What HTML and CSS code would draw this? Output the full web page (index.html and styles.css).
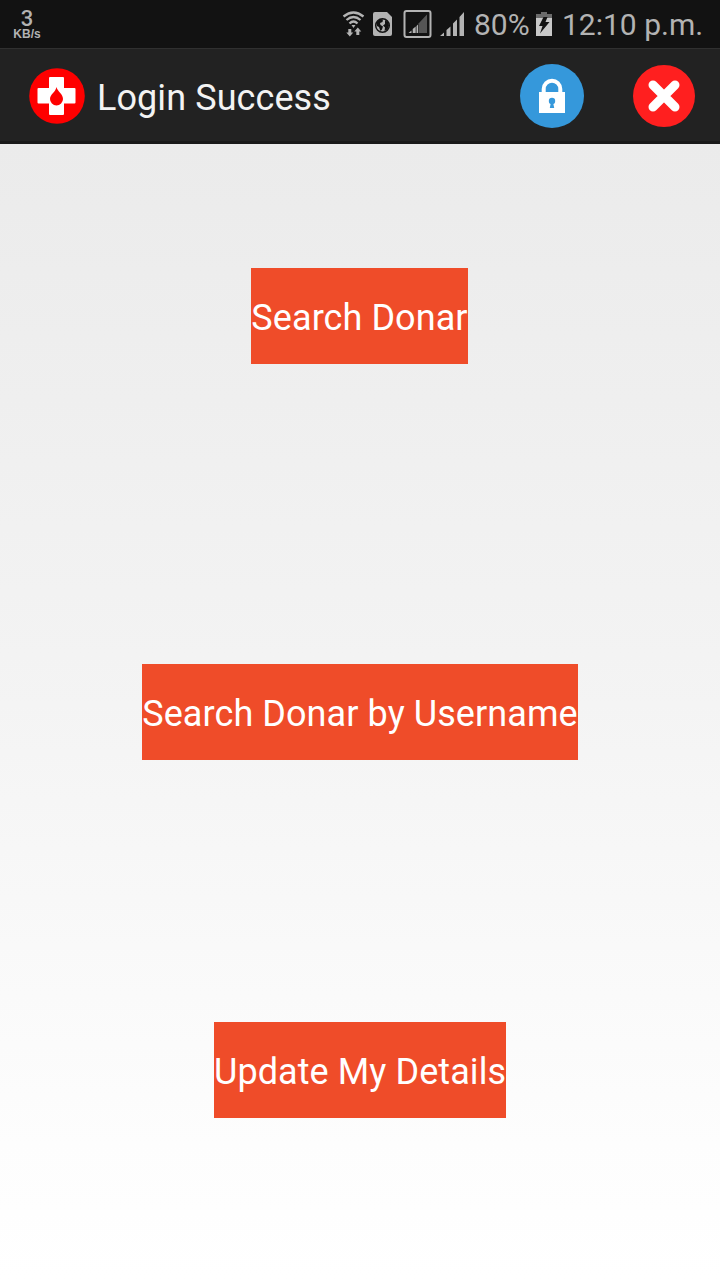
FILE: index.html
```html
<!DOCTYPE html>
<html lang="en">

<head>
  <meta charset="utf-8" />
  <title>Login Success</title>
  <link rel="stylesheet" href="styles.css">
</head>

<body>
  <div class="status-bar">
    <div class="net-speed">
      <span class="speed">3</span>
      <span class="unit">KB/s</span>
    </div>
    <div class="status-right">
      <!-- wifi, sim, signal -->
      <svg class="status-icons" width="126" height="48" viewBox="342 0 126 48">
        <g fill="none" stroke="#b3b3b3" stroke-width="2.3">
          <path d="M343.500 16.500Q353.500 8.500 363.500 16.500" />
          <path d="M346.500 20Q353.500 14 360.500 20" />
          <path d="M349.500 23.500Q353.500 19.500 357.500 23.500" />
        </g>
        <path fill="#b3b3b3" d="M351.500 25h4l-2 3z" />
        <path fill="#b3b3b3" d="M348.300 29h3v3.500h2l-3.500 4-3.500-4h2zM356.300 35h3v-3.500h2l-3.500-4-3.500 4h2z" />
        <path fill="#b3b3b3" d="M375 12h12l5 5v17q0 2-2 2h-15q-2 0-2-2v-20q0-2 2-2z" />
        <circle cx="382.500" cy="25.500" r="6.800" fill="#b3b3b3" stroke="#121212" stroke-width="1.500" />
        <path fill="#121212" d="M376.500 22.500l3.500-3.500 3 .5-.5 2.500-2.500 1 .5 2 2.500 1.500-1 3-1.500 1.500-1.500-4-2-1zM385 20l3 2 1 3.500-1.500 4-3 1.500.5-3.500-2-2 2-1.500z" />
        <rect x="404.500" y="11" width="26" height="26" rx="2" fill="none" stroke="#b3b3b3" stroke-width="2" />
        <path fill="#555" d="M418.500 23.500l8.500-9v18.500h-8.500z" />
        <path fill="#b3b3b3" d="M408.500 33l3-2.500v2.500zM412.700 33v-4l3-2.500v6.500zM416.500 33v-7l1.500-1.500v8.500z" />
        <path fill="#b3b3b3" d="M440 36l4-3.500v3.500zM446.500 36v-6l4-3.500v9.500zM453 36v-12.500l4-4v16.500zM459.500 36v-19l4.500-5v24z" />
      </svg>
      <span class="battery-level">80%</span>
      <svg class="battery" width="16" height="24" viewBox="0 0 16 24">
        <path fill="#6b6b6b" d="M5 0h6v2h5v4h-16v-4h5z" />
        <path fill="#c8c8c8" d="M0 6h16v18h-16z" />
        <path fill="#121212" d="M7.500 5h4l-2 5h4l-9.500 11.500 2.500-7.500h-3.500z" />
      </svg>
      <span class="clock">12:10 p.m.</span>
    </div>
  </div>

  <div class="action-bar">
    <svg class="logo" width="56" height="56" viewBox="0 0 56 56">
      <circle cx="28" cy="28" r="27.800" fill="#f00" />
      <path fill="#fff" d="M21 9h13q1 0 1 1v10h10.500q1 0 1 1v13.500q0 1-1 1h-10.500v10.500q0 1-1 1h-13q-1 0-1-1v-10.500h-10.500q-1 0-1-1v-13.500q0-1 1-1h10.500v-10q0-1 1-1z" />
      <path fill="#f00" d="M27.300 19C29 24 34 26 34 31a6.500 6.500 0 0 1-13 0C21 26 27 24 27.300 19z" />
    </svg>
    <h1 class="title">Login Success</h1>
    <svg class="lock" width="64" height="64" viewBox="0 0 64 64">
      <circle cx="32" cy="32" r="32" fill="#3598db" />
      <path fill="none" stroke="#fff" stroke-width="4" d="M23.700 30v-5a8.300 8.300 0 0 1 16.600 0v5" />
      <path fill="#fff" d="M19 28h26v21h-26z" />
      <circle cx="32" cy="37" r="3.200" fill="#3598db" />
      <path fill="#3598db" d="M31 38h2l1.200 6h-4.400z" />
    </svg>
    <svg class="close" width="62" height="62" viewBox="0 0 62 62">
      <circle cx="31" cy="31" r="31" fill="#ff1f1f" />
      <path stroke="#fff" stroke-width="9" stroke-linecap="round" d="M20 20l22 22M42 20l-22 22" />
    </svg>
  </div>

  <div class="content">
    <button class="btn btn-search">Search Donar</button>
    <button class="btn btn-username">Search Donar by Username</button>
    <button class="btn btn-update">Update My Details</button>
  </div>
</body>

</html>
```
FILE: styles.css
```css
* {
  box-sizing: border-box;
}

body {
  margin: 0;
  width: 720px;
  height: 1280px;
  display: flex;
  flex-direction: column;
  overflow: hidden;
  font-family: Roboto, "Noto Sans", sans-serif;
}

.status-bar {
  height: 48px;
  display: flex;
  justify-content: space-between;
  background-color: #121212;
  color: #b3b3b3;
}

.net-speed {
  display: flex;
  flex-direction: column;
  align-items: center;
  width: 54px;
  padding-top: 9px;
}

.speed {
  font-size: 22px;
  font-weight: 500;
  line-height: 19px;
}

.unit {
  font-family: "Liberation Sans", Arial, sans-serif;
  font-size: 12px;
  font-weight: bold;
  line-height: 12px;
}

.status-right {
  display: flex;
  width: 378px;
  font-size: 30px;
  line-height: 49px;
  white-space: nowrap;
}

.status-icons {
  flex: none;
}

.battery-level {
  width: 62px;
  padding-left: 6px;
}

.battery {
  flex: none;
  margin-top: 12px;
  margin-left: 6px;
}

.clock {
  margin-left: 10px;
}

.action-bar {
  height: 96px;
  display: flex;
  align-items: center;
  padding: 2px 25px 0 28px;
  background-color: #222;
  border-top: 1px solid #303030;
  border-bottom: 3px solid #191919;
}

.logo {
  margin-left: 1px;
}

.title {
  margin: 3px auto 0 12px;
  font-size: 36px;
  font-weight: 400;
  line-height: 42px;
  letter-spacing: 0.08px;
  color: #f3f3f3;
}

.lock {
  margin-right: 49px;
}

.content {
  flex: 1;
  display: flex;
  flex-direction: column;
  align-items: center;
  padding-top: 124px;
  background: linear-gradient(#ebebeb, #f3f3f3 45%, #f7f7f7 62%, #fdfdfd 88%, #fff);
}

.btn {
  height: 96px;
  padding: 3px 0 0;
  border: none;
  background-color: #ef4c29;
  color: #fff;
  font-family: inherit;
  font-size: 36px;
  letter-spacing: 0.08px;
  white-space: nowrap;
}

.btn-search {
  width: 217px;
  margin-right: 1px;
}

.btn-username {
  width: 436px;
  margin-top: 300px;
}

.btn-update {
  width: 292px;
  margin-top: 262px;
}
```
